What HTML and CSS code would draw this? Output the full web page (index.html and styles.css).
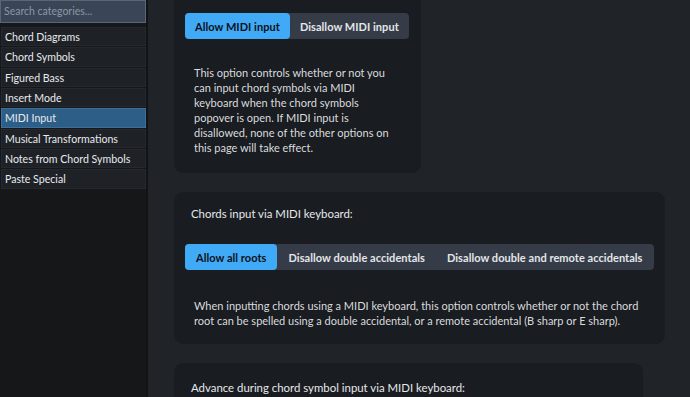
FILE: index.html
```html
<!DOCTYPE html>
<html>
<head>
<meta charset="utf-8">
<link rel="stylesheet" href="styles.css">
</head>
<body>
<div class="app">
  <aside class="sidebar">
    <div class="search">Search categories...</div>
    <ul class="cats">
      <li class="cat">Chord Diagrams</li>
      <li class="cat">Chord Symbols</li>
      <li class="cat">Figured Bass</li>
      <li class="cat">Insert Mode</li>
      <li class="cat cat-active">MIDI Input</li>
      <li class="cat">Musical Transformations</li>
      <li class="cat">Notes from Chord Symbols</li>
      <li class="cat">Paste Special</li>
    </ul>
  </aside>
  <main class="main">
    <section class="card card-1">
      <div class="seg">
        <button class="seg-btn seg-on">Allow MIDI input</button>
        <button class="seg-btn">Disallow MIDI input</button>
      </div>
      <p class="desc desc-1">This option controls whether or not you can input chord symbols via MIDI keyboard when the chord symbols popover is open. If MIDI input is disallowed, none of the other options on this page will take effect.</p>
    </section>
    <section class="card card-2">
      <h3 class="card-title">Chords input via MIDI keyboard:</h3>
      <div class="seg seg-wide">
        <button class="seg-btn seg-on">Allow all roots</button>
        <button class="seg-btn">Disallow double accidentals</button>
        <button class="seg-btn">Disallow double and remote accidentals</button>
      </div>
      <p class="desc desc-2">When inputting chords using a MIDI keyboard, this option controls whether or not the chord root can be spelled using a double accidental, or a remote accidental (B sharp or E sharp).</p>
    </section>
    <section class="card card-3">
      <h3 class="card-title">Advance during chord symbol input via MIDI keyboard:</h3>
    </section>
  </main>
</div>
</body>
</html>
```

FILE: styles.css
```css
* { box-sizing: border-box; }
html, body {
  margin: 0;
  padding: 0;
  height: 100%;
  overflow: hidden;
  background: #202428;
  font-family: "Lato", "Noto Sans", sans-serif;
  font-size: 12px;
  color: #dcdee1;
}
.app {
  display: flex;
  height: 397px;
  overflow: hidden;
}
.sidebar {
  width: 148px;
  flex: none;
  background: #151719;
  border-right: 2px solid #121315;
  display: flex;
  flex-direction: column;
}
.search {
  height: 23px;
  background: #3a4656;
  border: 1px solid #57667a;
  color: #8b97a7;
  padding: 0 3px;
  line-height: 20px;
  font-size: 10.5px;
}
.cats {
  list-style: none;
  margin: 4px 0 0 0;
  padding: 0;
  display: flex;
  flex-direction: column;
  gap: 1px;
}
.cat {
  height: 19.33px;
  line-height: 18px;
  margin-left: 1px;
  padding: 0 3px;
  background: #1e2227;
  border: 1px solid #25292f;
  color: #e8eaed;
  font-size: 10.6px;
  white-space: nowrap;
}
.cat-active {
  background: #2d5e88;
  border-color: #3d6f98;
}
.main {
  flex: 1;
  padding: 0 0 0 26px;
  display: flex;
  flex-direction: column;
  gap: 19px;
  align-items: flex-start;
}
.card {
  flex: none;
  background: #191c20;
  border-radius: 9px;
  padding: 13px 12px 17px 11px;
}
.card-1 {
  width: 247px;
  border-radius: 0 0 9px 9px;
  height: 173px;
}
.card-2 {
  width: 491px;
  height: 152px;
  padding-top: 12px;
}
.card-3 {
  width: 469px;
  height: 60px;
  padding-top: 15px;
}
.card-title {
  margin: 0 0 20px 6px;
  font-size: 11.4px;
  font-weight: 400;
  line-height: 20px;
  color: #e6e8eb;
}
.seg {
  display: inline-flex;
  background: #353c47;
  border-radius: 4px;
  height: 26px;
}
.seg-btn {
  font-family: inherit;
  font-size: 11px;
  font-weight: 700;
  letter-spacing: 0.05px;
  border: none;
  background: transparent;
  color: #e4e6e9;
  padding: 0 10px;
  height: 26px;
  border-radius: 4px;
  white-space: nowrap;
}
.seg-wide .seg-btn {
  padding: 0 11px;
}
.seg-on {
  background: #40aaf6;
  color: #0d1116;
}
.desc {
  margin: 26px 0 0 9px;
  line-height: 15px;
  font-size: 11px;
  color: #d9dbde;
}
.desc-1 {
  max-width: 202px;
}
.desc-2 {
  margin-top: 28px;
}
```
